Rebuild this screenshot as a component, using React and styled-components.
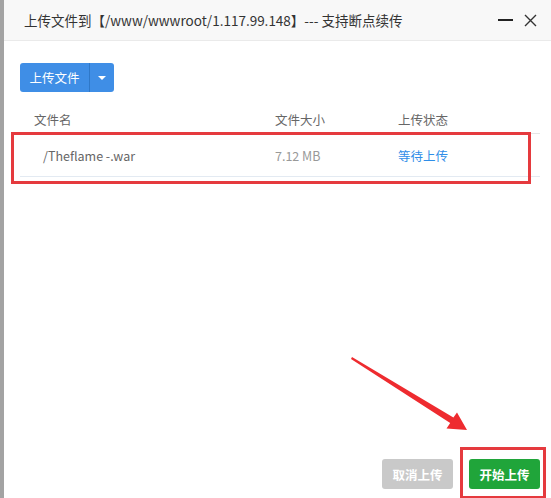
import { styled, createGlobalStyle } from "styled-components";

const GlobalStyle = createGlobalStyle`
    html, body {
        margin: 0;
        padding: 0;
        background: #fff;
    }
    body {
        font-family: "Noto Sans CJK SC", "Noto Sans", "Liberation Sans", sans-serif;
    }
`;

const Page = styled.div`
    width: 551px;
    height: 498px;
    display: flex;
    overflow: hidden;
`;

const LeftEdge = styled.div`
    width: 4px;
    flex-shrink: 0;
    background-color: #a3a3a3;
`;

const Dialog = styled.div`
    position: relative;
    flex: 1;
    display: flex;
    flex-direction: column;
    background-color: #fff;
`;

const Header = styled.div`
    height: 40px;
    flex-shrink: 0;
    display: flex;
    align-items: center;
    justify-content: space-between;
    padding: 0 14px 0 20px;
    background-color: #f8f8f8;
    border-bottom: 1px solid #eaeaea;
`;

const Title = styled.div`
    font-size: 13.5px;
    color: #333;
    white-space: nowrap;
`;

const Controls = styled.div`
    display: flex;
    align-items: center;
    gap: 11px;
`;

const Content = styled.div`
    flex: 1;
    display: flex;
    flex-direction: column;
    padding: 22px 11px 0 16px;
`;

const SplitButton = styled.div`
    display: flex;
    width: 94px;
    height: 29px;
    border-radius: 3px;
    overflow: hidden;
    background-color: #3f8ee6;
`;

const SplitMain = styled.div`
    width: 69px;
    display: flex;
    align-items: center;
    justify-content: center;
    color: #fff;
    font-size: 12.5px;
    border-right: 1px solid #2f78c8;
`;

const SplitCaret = styled.div`
    flex: 1;
    display: flex;
    align-items: center;
    justify-content: center;
    &::after {
        content: "";
        border-left: 4px solid transparent;
        border-right: 4px solid transparent;
        border-top: 4px solid #fff;
    }
`;

const Table = styled.div`
    margin-top: 13px;
    display: flex;
    flex-direction: column;
`;

const Row = styled.div`
    display: grid;
    grid-template-columns: 255px 123px 1fr;
    align-items: center;
    height: ${(p) => (p.$head ? "28px" : "42px")};
    border-bottom: 1px solid ${(p) => (p.$head ? "#e6e6e6" : "#e3eaf2")};
    font-size: 12.5px;
    color: #666;
`;

const Cell = styled.div`
    padding-left: ${(p) => p.$indent || 0}px;
    color: ${(p) => p.$color || "inherit"};
    white-space: nowrap;
`;

const Spacer = styled.div`
    flex: 1;
`;

const Footer = styled.div`
    display: flex;
    justify-content: flex-end;
    gap: 16px;
    padding-bottom: 9px;
`;

const ActionButton = styled.div`
    width: 71px;
    height: 30px;
    border-radius: 3px;
    display: flex;
    align-items: center;
    justify-content: center;
    color: #fff;
    font-size: 12.5px;
    font-weight: bold;
    background-color: ${(p) => (p.$primary ? "#20a53a" : "#c9c9c9")};
`;

const Annotation = styled.div`
    position: absolute;
    border: 3px solid #e53a3e;
    box-sizing: border-box;
    pointer-events: none;
`;

const Arrow = styled.svg`
    position: absolute;
    left: 340px;
    top: 350px;
    pointer-events: none;
`;

const Minimize = () => (
    <svg width="15" height="12" viewBox="0 0 15 12">
        <line x1="0" y1="6" x2="15" y2="6" stroke="#222" strokeWidth="2" />
    </svg>
);

const Close = () => (
    <svg width="13" height="13" viewBox="0 0 13 13">
        <path d="M1 1 L12 12 M12 1 L1 12" stroke="#333" strokeWidth="1.4" />
    </svg>
);

const files = [{ name: "/Theflame -.war", size: "7.12 MB", status: "等待上传" }];

const App = () => {
    return (
        <>
            <GlobalStyle />
            <Page>
                <LeftEdge />
                <Dialog>
                    <Header>
                        <Title>上传文件到【/www/wwwroot/1.117.99.148】--- 支持断点续传</Title>
                        <Controls>
                            <Minimize />
                            <Close />
                        </Controls>
                    </Header>
                    <Content>
                        <SplitButton>
                            <SplitMain>上传文件</SplitMain>
                            <SplitCaret />
                        </SplitButton>
                        <Table>
                            <Row $head>
                                <Cell $indent={14}>文件名</Cell>
                                <Cell>文件大小</Cell>
                                <Cell>上传状态</Cell>
                            </Row>
                            {files.map((f) => (
                                <Row key={f.name}>
                                    <Cell $indent={23}>{f.name}</Cell>
                                    <Cell $color="#999">{f.size}</Cell>
                                    <Cell $color="#2f8ee8">{f.status}</Cell>
                                </Row>
                            ))}
                        </Table>
                        <Spacer />
                        <Footer>
                            <ActionButton>取消上传</ActionButton>
                            <ActionButton $primary>开始上传</ActionButton>
                        </Footer>
                    </Content>

                    <Annotation style={{ left: 7, top: 132, width: 520, height: 52 }} />
                    <Annotation style={{ left: 456, top: 447, width: 86, height: 52 }} />
                    <Arrow width="135" height="90" viewBox="0 0 135 90">
                        <polygon points="8,7 109.4,67.5 113,62.5 123,80 102.5,78.5 106.2,73 7,9" fill="#ee2b2f" />
                    </Arrow>
                </Dialog>
            </Page>
        </>
    );
};

export default App;
